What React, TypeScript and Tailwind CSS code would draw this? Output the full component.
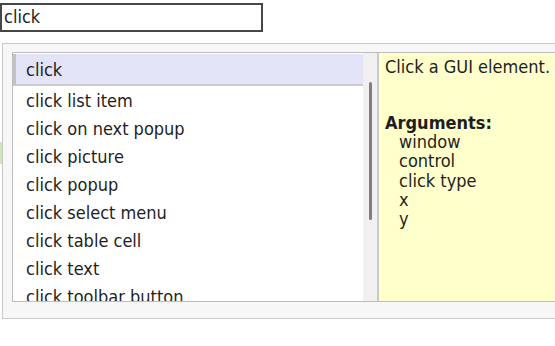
import React from "react"

const items = [
    "click",
    "click list item",
    "click on next popup",
    "click picture",
    "click popup",
    "click select menu",
    "click table cell",
    "click text",
    "click toolbar button",
]

const args = ["window", "control", "click type", "x", "y"]

export default function App() {
    return (
        <div
            className="relative w-[555px] h-[346px] overflow-hidden bg-white text-[#1e1e1e]"
            style={{ fontFamily: '"DejaVu Sans Condensed", "DejaVu Sans", sans-serif', fontStretch: "condensed" }}
        >
            {/* green thing peeking out behind the popup */}
            <div className="absolute left-0 top-[142px] w-[4px] h-[22px] bg-[#cfe6b8]" />

            {/* Search box */}
            <div className="mt-[3px] w-[263px] h-[29px] border-2 border-[#474747] px-[2px] text-[18px] leading-[24px]">
                click
            </div>

            {/* Popup */}
            <div className="relative ml-[2px] mt-[11px] w-[570px] h-[276px] border border-[#c9c9c9] bg-[#f7f7f7] pt-[8px] pl-[9px]">
                <div className="flex h-[250px] border border-[#bdbdbd] bg-white">
                    {/* List */}
                    <div className="w-[350px] pt-[1px] overflow-hidden text-[18px]">
                        {items.map((item, i) =>
                            i === 0 ? (
                                <div
                                    key={item}
                                    className="flex h-[32px] items-center border-b-2 border-[#cdcdcd] bg-[#e4e4f9] border-l-[3px] border-l-[#c2c2c2] pl-[10px]"
                                >
                                    {item}
                                </div>
                            ) : (
                                <div key={item} className="flex h-[28px] shrink-0 items-center pl-[13px] whitespace-nowrap">
                                    {item}
                                </div>
                            )
                        )}
                    </div>

                    {/* Scrollbar */}
                    <div className="relative w-[16px] bg-[#f0f0f0] border-r-2 border-[#cacaca]">
                        <div className="absolute left-[6px] top-[29px] w-[3px] h-[138px] rounded-full bg-[#7f7f7f]" />
                    </div>

                    {/* Help panel */}
                    <div className="flex-1 bg-[#ffffcc] pl-[6px] pt-[4px] text-[18px]">
                        <div className="leading-[20px] whitespace-nowrap">Click a GUI element.</div>
                        <div className="mt-[36px] font-bold leading-[19.2px]">Arguments:</div>
                        {args.map((a) => (
                            <div key={a} className="pl-[14px] leading-[19.2px]">
                                {a}
                            </div>
                        ))}
                    </div>
                </div>
            </div>
        </div>
    )
}
